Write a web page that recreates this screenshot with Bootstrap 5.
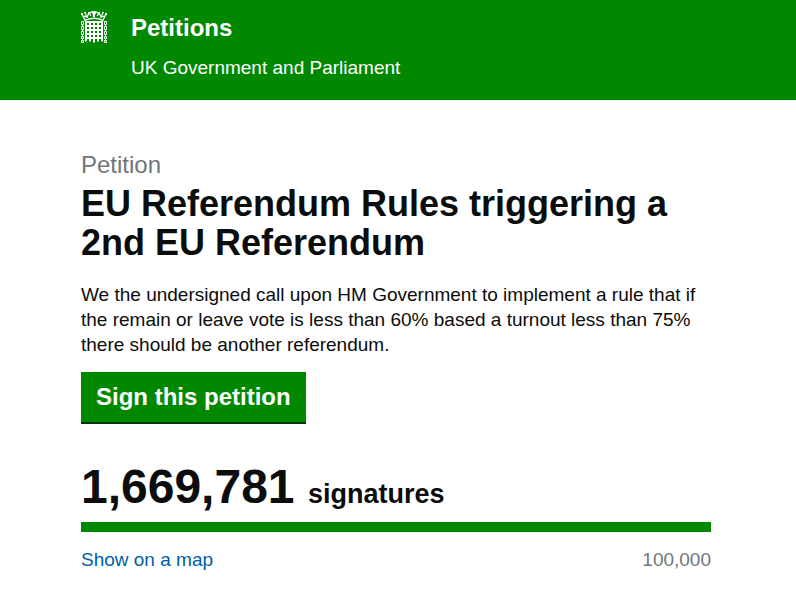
<!DOCTYPE html>
<html lang="en">
<head>
<meta charset="utf-8">
<meta name="viewport" content="width=device-width, initial-scale=1">
<title>Petitions</title>
<link href="https://cdn.jsdelivr.net/npm/bootstrap@5.3.0/dist/css/bootstrap.min.css" rel="stylesheet">
<script src="https://cdn.jsdelivr.net/npm/bootstrap@5.3.0/dist/js/bootstrap.bundle.min.js" defer></script>
<style>
body{font-family:"Liberation Sans",Arial,sans-serif;color:#0b0c0c;font-size:19px;line-height:25px}
.page-col{width:100%;max-width:1120px;padding:0 85px 0 81px}
.site-header{background:#008800;padding:10px 0 20px}
.crest{width:26px;height:34px;margin-right:24px}
.site-name{font-size:24px;line-height:30px;margin-top:3px;margin-bottom:12px}
.kicker{display:block;font-size:24px;line-height:30px;font-weight:400;color:#6f777b;margin-bottom:4px}
.title{font-size:36px;line-height:39px;font-weight:700;padding-top:50px;margin-bottom:20px}
.lede{margin-bottom:15px}
.sign,.sign:hover{background:#008800;color:#fff;font-size:24px;line-height:30px;padding:10px 15px;border:0;border-bottom:2px solid #003600;border-radius:0}
.count-line{font-size:48px;line-height:50px;margin:38px 0 3px}
.count-label{font-size:27px}
.meter{height:10px;border-radius:0;background:#dee0e2;margin-bottom:15px}
.meter .progress-bar{background:#008800}
.map-link{color:#005ea5}
.goal{color:#6f777b}
</style>
</head>
<body>
<header class="site-header text-white">
  <div class="page-col d-flex mx-auto">
    <svg class="crest flex-shrink-0" viewBox="0 0 26 34" fill="#fff" aria-hidden="true">
      <!-- crown -->
      <path d="M3 10Q13 5 23 10L22 11Q13 7 4 11ZM0 3h2v2H0zM24 3h2v2h-2zM3 2h2v1H3zM21 2h2v1h-2zM7 2h2v2H7zM17 2h2v2h-2zM12 1h2v1h1v2h-1v3h-2V4h-1V2h1z"/>
      <path d="M4 10 1 4M22 10 25 4M2 6 6 7 4 3M24 6 20 7 22 3M6 7 8 3 10 6M20 7 18 3 16 6M9 3Q11 1 13 2Q15 1 17 3" fill="none" stroke="#fff" stroke-width="1.200"/>
      <!-- grille -->
      <path d="M4 11h18v2H4zM4 15h18v2H4zM4 19h18v2H4zM4 23h18v2H4zM4 27h18v2H4zM4 11h2v19l-1 2-1-1zM8 11h2v20l-1 1-1-1zM12 11h2v21l-1 1-1-1zM16 11h2v20l-1 1-1-1zM20 11h2v20l-1 1-1-2z"/>
      <!-- chains -->
      <path d="M.5 11.500h2v3h-2zM.5 16.500h2v3h-2zM.5 21.500h2v3h-2zM.5 26.500h2v2h-2zM.5 30.500h2v2h-2zM1.500 14v3M1.500 19v3M1.500 24v3M1.500 28v3M23.500 11.500h2v3h-2zM23.500 16.500h2v3h-2zM23.500 21.500h2v3h-2zM23.500 26.500h2v2h-2zM23.500 30.500h2v2h-2zM24.500 14v3M24.500 19v3M24.500 24v3M24.500 28v3" fill="none" stroke="#fff"/>
    </svg>
    <div>
      <div class="site-name fw-bold">Petitions</div>
      <div>UK Government and Parliament</div>
    </div>
  </div>
</header>
<main class="page-col mx-auto">
  <h1 class="title"><span class="kicker">Petition</span>EU Referendum Rules triggering a 2nd EU Referendum</h1>
  <p class="lede">We the undersigned call upon HM Government to implement a rule that if the remain or leave vote is less than 60% based a turnout less than 75% there should be another referendum.</p>
  <button class="btn sign fw-bold d-block" type="button">Sign this petition</button>
  <p class="count-line fw-bold">1,669,781 <span class="count-label">signatures</span></p>
  <div class="progress meter" role="progressbar" aria-label="Signatures" aria-valuenow="100" aria-valuemin="0" aria-valuemax="100">
    <div class="progress-bar w-100"></div>
  </div>
  <div class="d-flex justify-content-between">
    <a class="map-link text-decoration-none" href="#map">Show on a map</a>
    <span class="goal">100,000</span>
  </div>
</main>
</body>
</html>
